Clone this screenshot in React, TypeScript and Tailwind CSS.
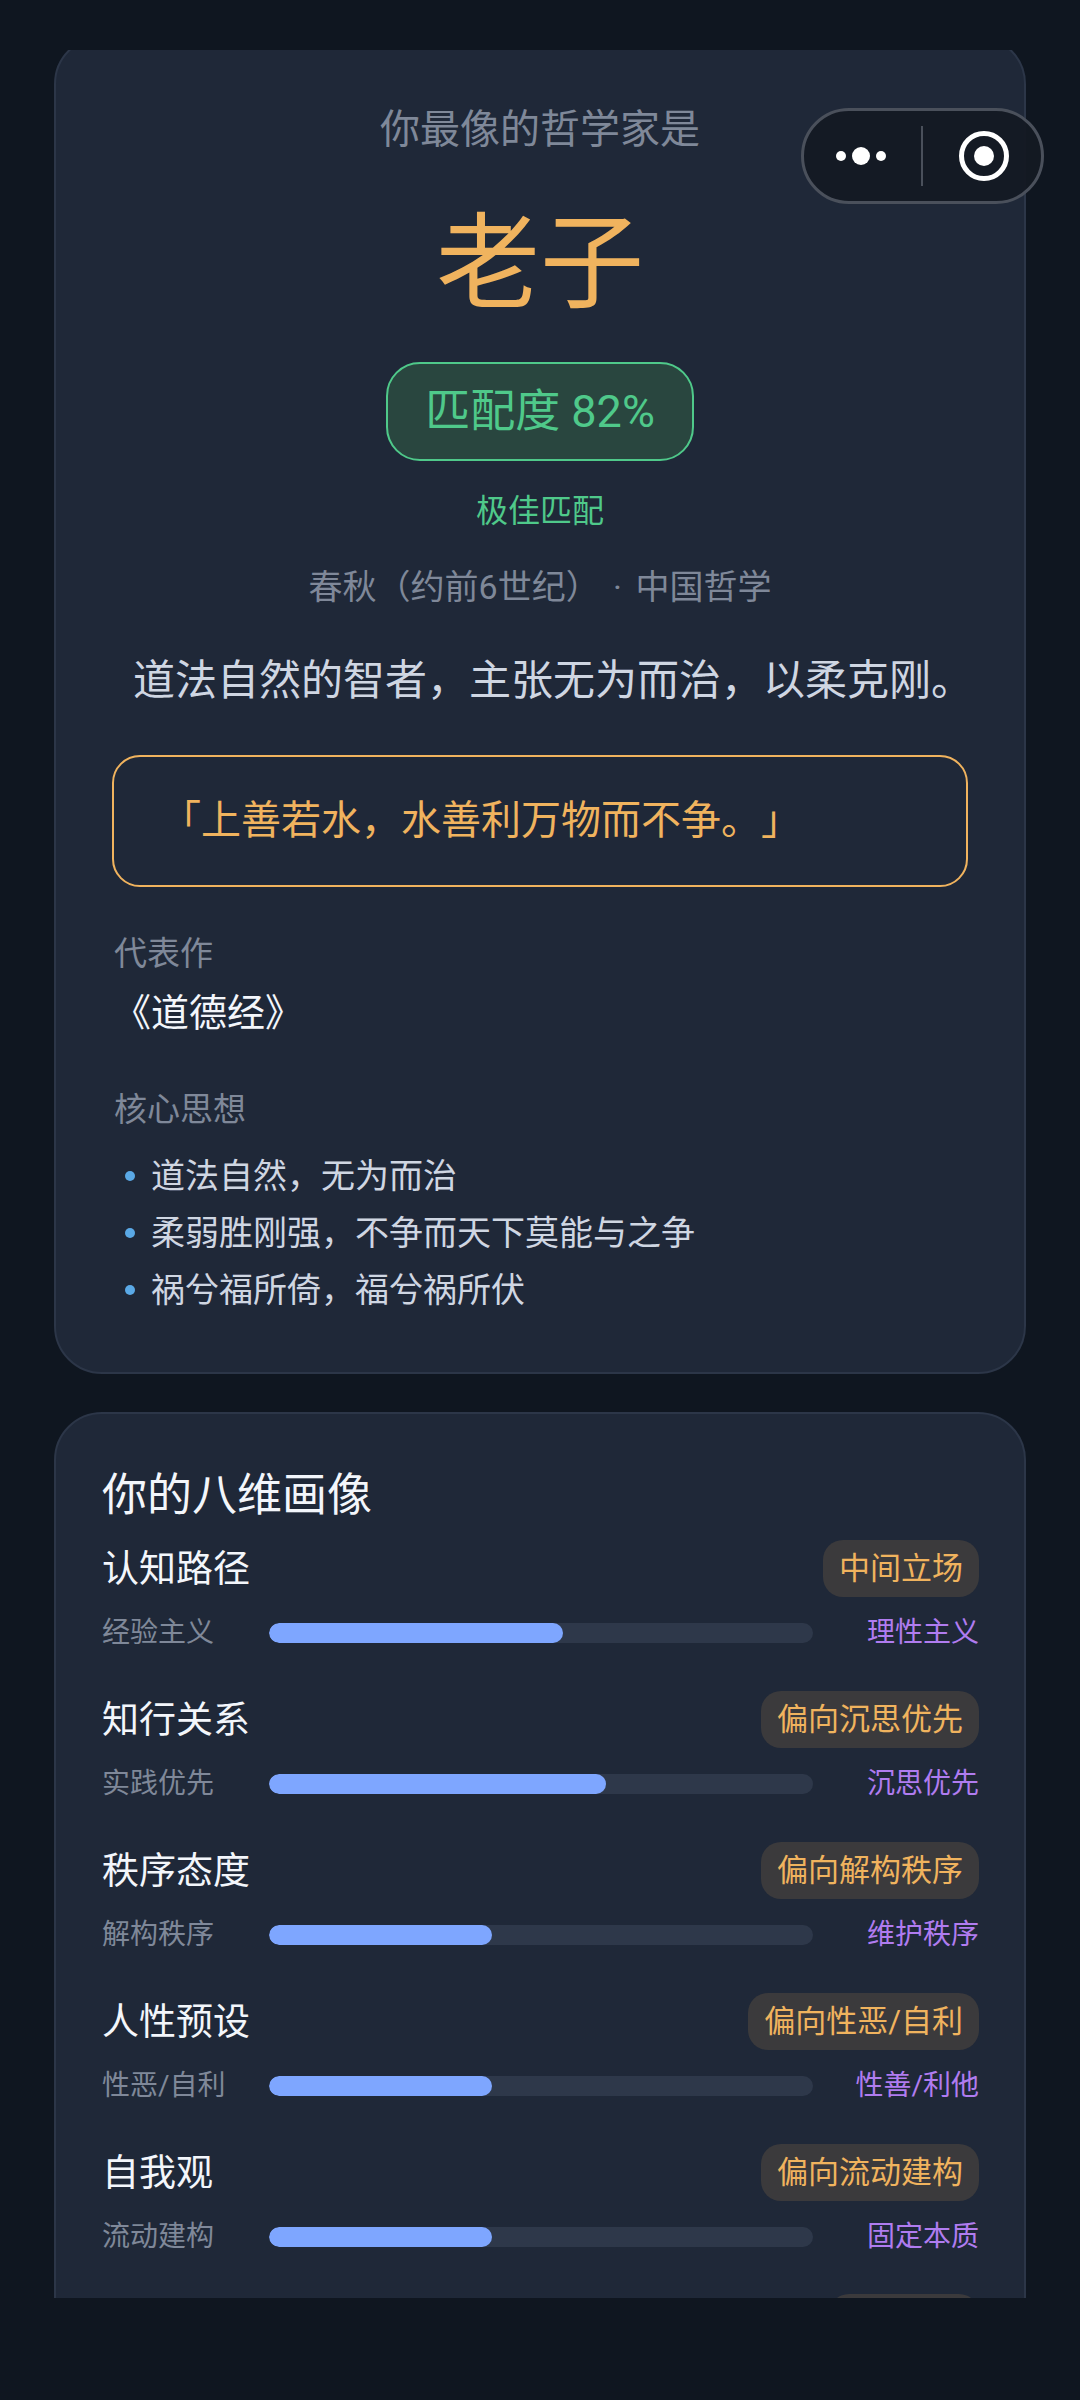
const font = { fontFamily: 'Roboto, "Noto Sans CJK SC", sans-serif' };

const dims = [
  { name: "认知路径", tag: "中间立场", left: "经验主义", right: "理性主义", pct: 54 },
  { name: "知行关系", tag: "偏向沉思优先", left: "实践优先", right: "沉思优先", pct: 62 },
  { name: "秩序态度", tag: "偏向解构秩序", left: "解构秩序", right: "维护秩序", pct: 41 },
  { name: "人性预设", tag: "偏向性恶/自利", left: "性恶/自利", right: "性善/利他", pct: 41 },
  { name: "自我观", tag: "偏向流动建构", left: "流动建构", right: "固定本质", pct: 41 },
];

function Dimension({ name, tag, left, right, pct }: (typeof dims)[number]) {
  return (
    <div className="h-[151px] shrink-0 pt-[4px]">
      <div className="flex h-[58px] items-center justify-between">
        <span className="mt-[4px] text-[37px] leading-[48px] text-[#f3f6fb]">{name}</span>
        <span className="rounded-[20px] bg-[#3b3a3c] px-[16px] py-[6px] text-[31px] leading-[45px] text-[#f0b35e]">{tag}</span>
      </div>
      <div className="mt-[12px] flex h-[48px] items-center">
        <span className="w-[167px] shrink-0 whitespace-nowrap text-[28px] text-[#7f8899]">{left}</span>
        <div className="h-[20px] w-[544px] shrink-0 overflow-hidden rounded-full bg-[#2e384a]">
          <div className="h-full rounded-full bg-[#7ea6ff]" style={{ width: `${pct}%` }} />
        </div>
        <span className="flex-1 whitespace-nowrap text-right text-[28px] text-[#b07cf0]">{right}</span>
      </div>
    </div>
  );
}

export default function App() {
  return (
    <div className="relative h-[2400px] w-[1080px] overflow-hidden bg-[#0f1620] [text-spacing-trim:space-all]" style={font}>
      <div className="mt-[50px] h-[2248px] overflow-hidden px-[54px]">
        <section className="-mt-[14px] h-[1338px] rounded-[48px] border-2 border-[#2c3648] bg-[#1f2838] px-[56px] pt-[62px] text-center">
          <p className="text-[40px] leading-[60px] text-[#7f8899]">你最像的哲学家是</p>
          <h1 className="mt-[30px] text-[104px] font-normal leading-[150px] text-[#f0b35e]">老子</h1>
          <div className="mt-[22px] flex justify-center">
            <span className="rounded-[34px] border-2 border-[#4fc98a] bg-[#29463f] px-[37px] py-[19px] text-[45px] leading-[57px] text-[#4fc98a]">匹配度 82%</span>
          </div>
          <p className="mt-[28px] text-[32px] leading-[44px] text-[#4fc98a]">极佳匹配</p>
          <p className="mt-[31px] text-[34px] leading-[46px] text-[#7f8899]">
            春秋（约前6世纪）<span className="mx-[5px]"> · </span>中国哲学
          </p>
          <p className="mt-[41px] whitespace-nowrap pl-[21px] text-left text-[42px] leading-[60px] text-[#cfd6e2]">道法自然的智者，主张无为而治，以柔克刚。</p>
          <div className="mt-[44px] flex h-[132px] items-center rounded-[28px] border-2 border-[#f0b35e] px-[47px] text-left text-[40px] text-[#f0b35e]">「上善若水，水善利万物而不争。」</div>
          <div className="mt-[43px] pl-[2px] text-left">
            <p className="text-[33px] leading-[48px] text-[#7f8899]">代表作</p>
            <p className="-ml-[1px] mt-[7px] text-[38px] leading-[56px] text-[#f3f6fb]">《道德经》</p>
            <p className="mt-[45px] text-[33px] leading-[48px] text-[#7f8899]">核心思想</p>
            <ul className="mt-[18px] space-y-[9px]">
              {["道法自然，无为而治", "柔弱胜刚强，不争而天下莫能与之争", "祸兮福所倚，福兮祸所伏"].map((t) => (
                <li key={t} className="flex h-[48px] items-center text-[34px] text-[#cfd6e2]">
                  <span className="ml-[11px] mr-[16px] h-[10px] w-[10px] rounded-full bg-[#5aa9e6]" />
                  {t}
                </li>
              ))}
            </ul>
          </div>
        </section>
        <section className="mt-[38px] h-[1000px] rounded-[48px] border-2 border-[#2c3648] bg-[#1f2838] pl-[46px] pr-[45px] pt-[50px]">
          <h2 className="text-[45px] leading-[64px] text-[#f3f6fb]">你的八维画像</h2>
          <div className="mt-[7px]">
            {dims.map((d) => (
              <Dimension key={d.name} {...d} />
            ))}
            <div className="flex justify-end pt-[4px]">
              <span className="h-[20px] w-[150px] rounded-t-[20px] bg-[#3b3a3c]" />
            </div>
          </div>
        </section>
      </div>
      <div className="absolute left-[801px] top-[108px] flex h-[96px] w-[243px] items-center rounded-full border-[3px] border-[#4a505b] bg-[#141923]/95">
        <div className="ml-[32px] flex items-center gap-[6px]">
          <span className="h-[10px] w-[10px] rounded-full bg-white" />
          <span className="h-[18px] w-[18px] rounded-full bg-white" />
          <span className="h-[10px] w-[10px] rounded-full bg-white" />
        </div>
        <span className="ml-[35px] h-[60px] w-[2px] bg-[#4a505b]" />
        <span className="ml-[36px] flex h-[50px] w-[50px] items-center justify-center rounded-full border-[5px] border-white">
          <span className="h-[20px] w-[20px] rounded-full bg-white" />
        </span>
      </div>
    </div>
  );
}
